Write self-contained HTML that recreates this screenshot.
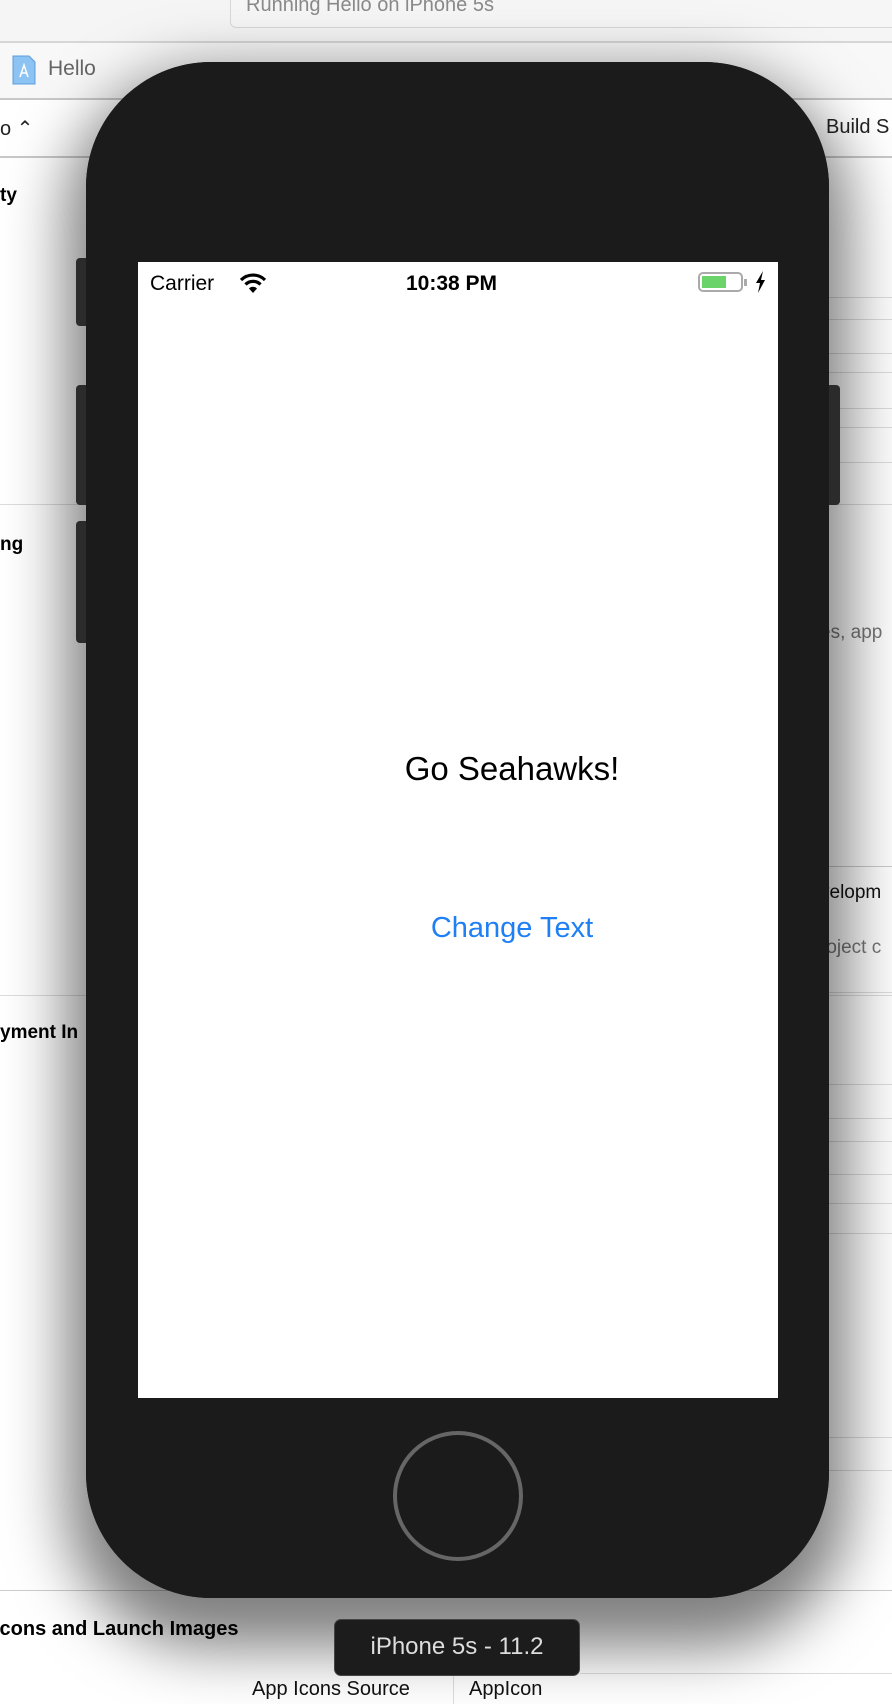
<!DOCTYPE html>
<html><head><meta charset="utf-8"><style>
body{margin:0;width:892px;height:1700px;overflow:hidden;background:#fff;position:relative;font-family:"Liberation Sans",sans-serif}
.a{position:absolute}
.hl{position:absolute;height:1px;background:#ddd}
.t{position:absolute;white-space:nowrap}
</style></head><body>
<div class="a" style="left:0;top:0;width:892px;height:41px;background:#f5f5f5;border-bottom:2px solid #d6d6d6"></div>
<div class="a" style="left:230px;top:-10px;width:700px;height:36px;border:1px solid #d8d8d8;border-radius:6px;background:#f6f6f6"></div>
<div class="t" style="left:246px;top:-6px;font-size:20px;color:#8a8a8a">Running Hello on iPhone 5s</div>
<div class="a" style="left:0;top:43px;width:892px;height:55px;background:#f8f8f8;border-bottom:2px solid #c8c8c8"></div>
<svg class="a" style="left:12px;top:55px" width="24" height="30"><path d="M1 1h16l6 6v22H1z" fill="#8cc3f2" stroke="#5a9ee0"/><path d="M8 22l4-12 4 12M9 18h6" stroke="#fff" fill="none" stroke-width="1.5"/></svg>
<div class="t" style="left:48px;top:57px;font-size:21px;color:#666">Hello</div>
<div class="a" style="left:0;top:100px;width:892px;height:56px;background:#fff;border-bottom:2px solid #c8c8c8"></div>
<div class="t" style="left:0;top:116px;font-size:20px;color:#222">o ⌃</div>
<div class="t" style="left:826px;top:116px;font-size:20px;color:#222">Build S</div>
<div class="t" style="left:0;top:185px;font-size:19px;font-weight:bold">ty</div>
<div class="hl" style="left:0;top:504px;width:892px"></div>
<div class="t" style="left:0;top:534px;font-size:19px;font-weight:bold">ng</div>
<div class="hl" style="left:0;top:995px;width:892px"></div>
<div class="t" style="left:0;top:1022px;font-size:19px;font-weight:bold">yment In</div>
<div class="hl" style="left:800px;top:297px;width:92px"></div><div class="hl" style="left:800px;top:319px;width:92px"></div>
<div class="hl" style="left:800px;top:353px;width:92px"></div><div class="hl" style="left:800px;top:372px;width:92px"></div>
<div class="hl" style="left:800px;top:408px;width:92px"></div><div class="hl" style="left:800px;top:427px;width:92px"></div>
<div class="hl" style="left:800px;top:462px;width:92px"></div>
<div class="t" style="left:820px;top:622px;font-size:19px;color:#777">es, app</div>
<div class="hl" style="left:800px;top:866px;width:92px;background:#ccc"></div>
<div class="t" style="left:820px;top:882px;font-size:19px;color:#111">velopm</div>
<div class="t" style="left:820px;top:937px;font-size:19px;color:#777">roject c</div>
<div class="hl" style="left:800px;top:992px;width:92px"></div><div class="hl" style="left:800px;top:1084px;width:92px"></div>
<div class="hl" style="left:800px;top:1118px;width:92px"></div><div class="hl" style="left:800px;top:1141px;width:92px"></div>
<div class="hl" style="left:800px;top:1174px;width:92px"></div><div class="hl" style="left:800px;top:1203px;width:92px"></div>
<div class="hl" style="left:800px;top:1233px;width:92px"></div><div class="hl" style="left:800px;top:1437px;width:92px"></div>
<div class="hl" style="left:800px;top:1470px;width:92px"></div>
<div class="hl" style="left:0;top:1590px;width:892px;background:#ccc"></div>
<div class="hl" style="left:580px;top:1673px;width:312px"></div>
<div class="t" style="left:-6px;top:1618px;font-size:20px;font-weight:bold">Icons and Launch Images</div>
<div class="t" style="left:252px;top:1678px;font-size:20px;color:#111">App Icons Source</div>
<div class="a" style="left:453px;top:1674px;width:1px;height:30px;background:#ddd"></div>
<div class="t" style="left:469px;top:1678px;font-size:20px;color:#111">AppIcon</div>
<!-- phone -->
<div class="a" style="left:86px;top:62px;width:743px;height:1536px;border-radius:125px;background:#1b1b1b;box-shadow:0 30px 60px 20px rgba(0,0,0,.5)"></div>
<div class="a" style="left:76px;top:258px;width:14px;height:68px;background:#2b2b2b;border-radius:4px"></div>
<div class="a" style="left:76px;top:385px;width:14px;height:120px;background:#2b2b2b;border-radius:4px"></div>
<div class="a" style="left:76px;top:521px;width:14px;height:122px;background:#2b2b2b;border-radius:4px"></div>
<div class="a" style="left:826px;top:385px;width:14px;height:120px;background:#2b2b2b;border-radius:4px"></div>
<div class="a" style="left:86px;top:62px;width:743px;height:1536px;background:#1b1b1b;border-radius:125px"></div>
<div class="a" style="left:138px;top:262px;width:640px;height:1136px;background:#fff"></div>
<div class="t" style="left:150px;top:272px;font-size:21px;color:#000">Carrier</div>
<svg class="a" style="left:239px;top:272px" width="28" height="22" viewBox="0 0 28 22"><g fill="none" stroke="#000" stroke-width="3.2"><path d="M2 8a17 17 0 0 1 24 0"/><path d="M6.5 12.5a10.5 10.5 0 0 1 15 0"/></g><path d="M10 16.5a5.5 5.5 0 0 1 8 0L14 21z" fill="#000"/></svg>
<div class="t" style="left:406px;top:272px;font-size:21px;font-weight:bold;color:#000">10:38 PM</div>
<div class="a" style="left:698px;top:272px;width:45px;height:20px;border:2px solid #aaa;border-radius:5px;box-sizing:border-box"></div>
<div class="a" style="left:702px;top:276px;width:24px;height:12px;background:#6ad46a"></div>
<div class="a" style="left:744px;top:279px;width:3px;height:7px;background:#aaa"></div>
<svg class="a" style="left:755px;top:271px" width="12" height="22"><path d="M8 0L1 12h4l-2 10 7-13H6z" fill="#000"/></svg>
<div class="t" style="left:312px;top:750px;width:400px;text-align:center;font-size:33px;color:#000">Go Seahawks!</div>
<div class="t" style="left:312px;top:912px;width:400px;text-align:center;font-size:29px;color:#1f7ff4">Change Text</div>
<div class="a" style="left:393px;top:1431px;width:130px;height:130px;border:4px solid #666;border-radius:50%;box-sizing:border-box"></div>
<div class="a" style="left:334px;top:1619px;width:246px;height:57px;background:#1c1c1c;border-radius:7px;border:1px solid #444;box-sizing:border-box"></div>
<div class="t" style="left:334px;top:1633px;width:246px;text-align:center;font-size:24px;color:#ddd">iPhone 5s - 11.2</div>
</body></html>
